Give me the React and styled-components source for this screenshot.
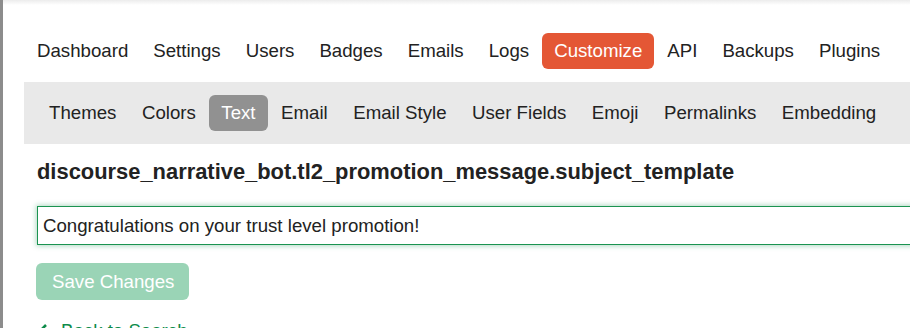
import React from "react";
import styled, { createGlobalStyle } from "styled-components";

const Global = createGlobalStyle`
  html, body { margin: 0; padding: 0; background: #fff; overflow: clip; }
  body { font-family: "Liberation Sans", Arial, sans-serif; color: #222; }
  * { box-sizing: border-box; }
`;

const Frame = styled.div`
  position: relative;
  width: 910px;
  height: 328px;
  border-left: 3px solid #8c8c8c;
  overflow: clip;
  padding-left: 21px;
  &::before {
    content: "";
    position: absolute;
    left: 0; right: 0; top: 0;
    height: 5px;
    background: linear-gradient(#ececec, rgba(255,255,255,0));
  }
`;

const MainNav = styled.ul`
  display: flex;
  gap: 1px;
  list-style: none;
  margin: 0;
  padding: 33px 0 0 1px;
`;

const NavItem = styled.li`
  height: 36px;
  line-height: 36px;
  padding: 0 12px;
  font-size: 18.67px;
  border-radius: 6px;
  white-space: nowrap;
  color: ${(p) => (p.$active ? "#fff" : "#222")};
  background: ${(p) => (p.$active ? "#e45735" : "transparent")};
`;

const SubNav = styled.ul`
  display: flex;
  gap: 1.5px;
  list-style: none;
  margin: 13px 0 0 0;
  padding: 13px 13px;
  width: 1000px;
  background: #e9e9e9;
`;

const SubItem = styled.li`
  height: 36px;
  line-height: 36px;
  padding: 0 12px;
  font-size: 18.67px;
  border-radius: 6px;
  white-space: nowrap;
  color: ${(p) => (p.$active ? "#fff" : "#222")};
  background: ${(p) => (p.$active ? "#919191" : "transparent")};
`;

const Content = styled.div`
  padding-left: 13px;
`;

const Title = styled.h3`
  margin: 15px 0 0 0;
  font-size: 21.9px;
  font-weight: bold;
  color: #222;
  line-height: normal;
  white-space: nowrap;
`;

const TextInput = styled.input`
  display: block;
  margin-top: 21px;
  width: 1000px;
  height: 39px;
  padding: 0 5px;
  font-family: "Liberation Sans", Arial, sans-serif;
  font-size: 18.67px;
  color: #222;
  border: 1px solid #1a9350;
  border-radius: 0;
  outline: none;
  box-shadow: 0 0 5px 1px rgba(26, 147, 80, 0.35);
  caret-color: #222;
`;

const SaveButton = styled.button`
  display: block;
  margin: 18px 0 0 -1px;
  height: 37px;
  padding: 0 15px 0 16px;
  font-family: "Liberation Sans", Arial, sans-serif;
  font-size: 18.67px;
  color: #fff;
  background: #9ad4b6;
  border: none;
  border-radius: 6px;
`;

const BackLink = styled.a`
  display: flex;
  align-items: center;
  gap: 13px;
  margin-top: 20px;
  margin-left: 1px;
  font-size: 18.67px;
  color: #0e8b4a;
  text-decoration: none;
  line-height: normal;
`;

const main = ["Dashboard", "Settings", "Users", "Badges", "Emails", "Logs", "Customize", "API", "Backups", "Plugins"];
const sub = ["Themes", "Colors", "Text", "Email", "Email Style", "User Fields", "Emoji", "Permalinks", "Embedding"];

export default function App() {
  return (
    <Frame>
      <Global />
      <MainNav>
        {main.map((m) => (
          <NavItem key={m} $active={m === "Customize"}>{m}</NavItem>
        ))}
      </MainNav>
      <SubNav>
        {sub.map((s) => (
          <SubItem key={s} $active={s === "Text"}>{s}</SubItem>
        ))}
      </SubNav>
      <Content>
        <Title>discourse_narrative_bot.tl2_promotion_message.subject_template</Title>
        <TextInput defaultValue="Congratulations on your trust level promotion!" />
        <SaveButton disabled>Save Changes</SaveButton>
        <BackLink href="#">
          <svg width="10" height="14" viewBox="0 0 10 14">
            <path d="M8 1 L2 7 L8 13" fill="none" stroke="#0e8b4a" strokeWidth="2.6" />
          </svg>
          Back to Search
        </BackLink>
      </Content>
    </Frame>
  );
}
